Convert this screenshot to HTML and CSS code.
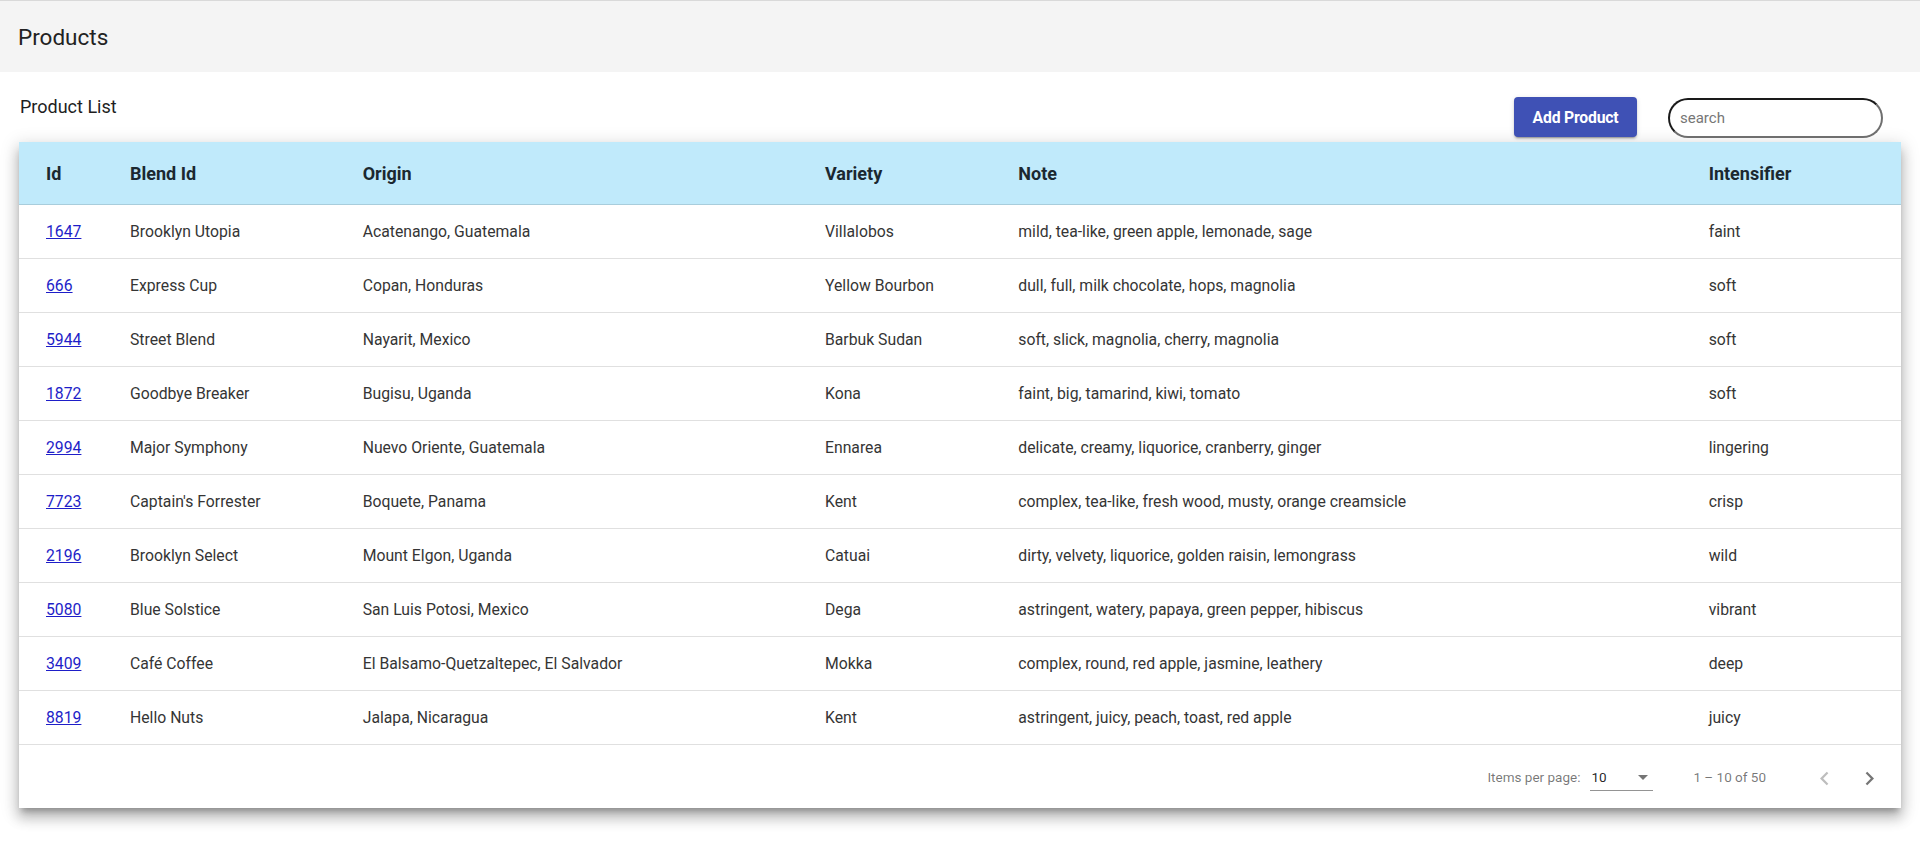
FILE: index.html
```html
<!DOCTYPE html>
<html lang="en">
<head>
<meta charset="utf-8">
<title>Products</title>
<link rel="stylesheet" href="styles.css">
</head>
<body>
<header class="app-bar">
  <h1 class="app-title">Products</h1>
</header>
<main class="page">
  <div class="list-head">
    <h2 class="list-title">Product List</h2>
    <div class="list-actions">
      <button class="btn-add" type="button">Add Product</button>
      <input class="search" type="text" placeholder="search">
    </div>
  </div>
  <section class="card">
    <table class="grid">
      <colgroup>
        <col class="c-id"><col class="c-blend"><col class="c-origin"><col class="c-variety"><col class="c-note"><col class="c-int">
      </colgroup>
      <thead>
        <tr><th>Id</th><th>Blend Id</th><th>Origin</th><th>Variety</th><th>Note</th><th>Intensifier</th></tr>
      </thead>
      <tbody>
        <tr><td><a href="#">1647</a></td><td>Brooklyn Utopia</td><td>Acatenango, Guatemala</td><td>Villalobos</td><td>mild, tea-like, green apple, lemonade, sage</td><td>faint</td></tr>
        <tr><td><a href="#">666</a></td><td>Express Cup</td><td>Copan, Honduras</td><td>Yellow Bourbon</td><td>dull, full, milk chocolate, hops, magnolia</td><td>soft</td></tr>
        <tr><td><a href="#">5944</a></td><td>Street Blend</td><td>Nayarit, Mexico</td><td>Barbuk Sudan</td><td>soft, slick, magnolia, cherry, magnolia</td><td>soft</td></tr>
        <tr><td><a href="#">1872</a></td><td>Goodbye Breaker</td><td>Bugisu, Uganda</td><td>Kona</td><td>faint, big, tamarind, kiwi, tomato</td><td>soft</td></tr>
        <tr><td><a href="#">2994</a></td><td>Major Symphony</td><td>Nuevo Oriente, Guatemala</td><td>Ennarea</td><td>delicate, creamy, liquorice, cranberry, ginger</td><td>lingering</td></tr>
        <tr><td><a href="#">7723</a></td><td>Captain's Forrester</td><td>Boquete, Panama</td><td>Kent</td><td>complex, tea-like, fresh wood, musty, orange creamsicle</td><td>crisp</td></tr>
        <tr><td><a href="#">2196</a></td><td>Brooklyn Select</td><td>Mount Elgon, Uganda</td><td>Catuai</td><td>dirty, velvety, liquorice, golden raisin, lemongrass</td><td>wild</td></tr>
        <tr><td><a href="#">5080</a></td><td>Blue Solstice</td><td>San Luis Potosi, Mexico</td><td>Dega</td><td>astringent, watery, papaya, green pepper, hibiscus</td><td>vibrant</td></tr>
        <tr><td><a href="#">3409</a></td><td>Café Coffee</td><td>El Balsamo-Quetzaltepec, El Salvador</td><td>Mokka</td><td>complex, round, red apple, jasmine, leathery</td><td>deep</td></tr>
        <tr><td><a href="#">8819</a></td><td>Hello Nuts</td><td>Jalapa, Nicaragua</td><td>Kent</td><td>astringent, juicy, peach, toast, red apple</td><td>juicy</td></tr>
      </tbody>
    </table>
    <div class="paginator">
      <span class="pg-label">Items per page:</span>
      <div class="pg-select">
        <span class="pg-value">10</span>
        <span class="pg-arrow"></span>
      </div>
      <span class="pg-range">1 – 10 of 50</span>
      <button class="pg-btn pg-prev" type="button" aria-label="Previous page">
        <svg viewBox="0 0 24 24" width="27" height="27"><path d="M15.41 7.41L14 6l-6 6 6 6 1.41-1.41L10.83 12z"/></svg>
      </button>
      <button class="pg-btn pg-next" type="button" aria-label="Next page">
        <svg viewBox="0 0 24 24" width="27" height="27"><path d="M10 6L8.59 7.41 13.17 12l-4.58 4.59L10 18l6-6z"/></svg>
      </button>
    </div>
  </section>
</main>
</body>
</html>
```

FILE: styles.css
```css
* { box-sizing: border-box; }

html, body {
  margin: 0;
  padding: 0;
  background: #ffffff;
  font-family: Roboto, "Liberation Sans", Arial, sans-serif;
  color: rgba(0, 0, 0, 0.87);
}

.app-bar {
  height: 72px;
  border-top: 1px solid #d9d9d9;
  background: #f4f4f4;
  padding: 0 18px;
  display: flex;
  align-items: center;
}

.app-title {
  margin: 0;
  font-size: 22.5px;
  font-weight: 400;
  color: #222;
}

.page {
  padding: 0 19px 40px;
}

.list-head {
  display: flex;
  justify-content: space-between;
  align-items: flex-start;
  height: 70px;
}

.list-title {
  margin: 21px 0 0 1px;
  font-size: 18px;
  line-height: 27px;
  font-weight: 400;
  color: #1e1e1e;
}

.list-actions {
  display: flex;
  align-items: flex-start;
  gap: 31px;
  padding-top: 25px;
  margin-right: 18px;
}

.btn-add {
  width: 123px;
  height: 40px;
  border: none;
  border-radius: 4px;
  background: #3f51b5;
  color: #fff;
  font-family: Roboto, "Liberation Sans", Arial, sans-serif;
  font-size: 15.75px;
  font-weight: 700;
  letter-spacing: -0.2px;
  box-shadow: 0 3px 1px -2px rgba(0,0,0,.2), 0 2px 2px 0 rgba(0,0,0,.14), 0 1px 5px 0 rgba(0,0,0,.12);
  cursor: pointer;
}

.search {
  width: 215px;
  height: 40px;
  margin-top: 1px;
  border: 2px solid;
  border-color: #1a1a1a #6f6f6f #6f6f6f #1a1a1a;
  border-radius: 20px;
  padding: 0 10px;
  font-family: Roboto, "Liberation Sans", Arial, sans-serif;
  font-size: 15px;
  color: #333;
  background: #fff;
  outline: none;
}

.search::placeholder {
  color: #767676;
}

.card {
  background: #fff;
  box-shadow: 0 6px 6px -3px rgba(0,0,0,.25), 0 10px 12px 1px rgba(0,0,0,.18), 0 4px 16px 3px rgba(0,0,0,.13);
}

.grid {
  width: 100%;
  table-layout: fixed;
  border-collapse: separate;
  border-spacing: 0;
}

.c-id { width: 111px; }
.c-blend { width: 232.7px; }
.c-origin { width: 462.3px; }
.c-variety { width: 193.3px; }
.c-note { width: 690.4px; }
.c-int { width: 192.3px; }

.grid th {
  height: 63px;
  padding: 0;
  background: #c0eafb;
  border-bottom: 1px solid rgba(0, 0, 0, 0.12);
  text-align: left;
  font-size: 18px;
  font-weight: 700;
  color: #1b2830;
  vertical-align: middle;
}

.grid td {
  height: 54px;
  padding: 0;
  border-bottom: 1px solid #e0e0e0;
  font-size: 15.75px;
  font-weight: 400;
  color: #353535;
  vertical-align: middle;
  white-space: nowrap;
}

.grid th:first-child,
.grid td:first-child {
  padding-left: 27px;
}

.grid th:last-child,
.grid td:last-child {
  padding-right: 27px;
}

.grid a {
  color: #1e1ec8;
  text-decoration: underline;
}

.paginator {
  height: 63px;
  display: flex;
  justify-content: flex-end;
  align-items: center;
  padding: 0 9px;
  font-size: 13.5px;
  color: rgba(0, 0, 0, 0.54);
}

.pg-label {
  margin-right: 10px;
}

.pg-select {
  width: 63px;
  height: 27px;
  margin-top: 1px;
  display: flex;
  align-items: center;
  justify-content: space-between;
  border-bottom: 1px solid rgba(0, 0, 0, 0.42);
  padding: 0 5px 0 1px;
  color: rgba(0, 0, 0, 0.87);
}

.pg-arrow {
  width: 0;
  height: 0;
  border-left: 5.6px solid transparent;
  border-right: 5.6px solid transparent;
  border-top: 5.6px solid rgba(0, 0, 0, 0.54);
  margin-top: 1px;
}

.pg-range {
  margin: 0 36px 0 40px;
}

.pg-btn {
  width: 45px;
  height: 45px;
  padding: 0;
  border: none;
  background: transparent;
  display: flex;
  align-items: center;
  justify-content: center;
  margin-top: 3px;
}

.pg-prev svg { fill: rgba(0, 0, 0, 0.26); }
.pg-next svg { fill: rgba(0, 0, 0, 0.54); }
```
